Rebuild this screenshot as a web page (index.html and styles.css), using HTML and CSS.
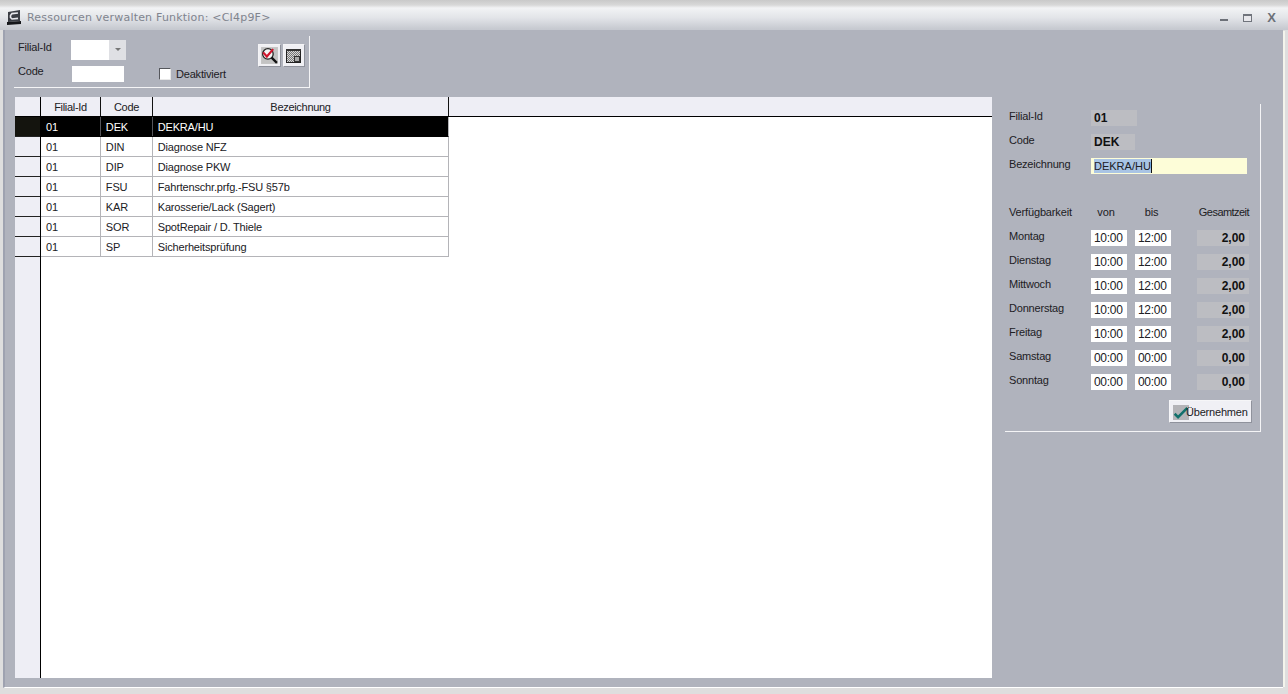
FILE: index.html
```html
<!DOCTYPE html>
<html lang="de">
<head>
  <meta charset="UTF-8" />
  <title>Ressourcen verwalten</title>
  <link rel="stylesheet" href="styles.css">
</head>
<body>
  <div class="window">
    <header class="titlebar">
      <svg class="app-icon" width="14" height="15" viewBox="0 0 14 15">
        <path d="M1 2 L13 0 L13 11 L1 12 Z" fill="#3a3d44"/>
        <path d="M11 3 L5 3.6 L3.5 5.5 L3.5 7.5 L5 9 L11 8.4" fill="none" stroke="#e8e8ee" stroke-width="1.6"/>
        <path d="M0 12 L14 11 L14 14 L0 15 Z" fill="#15161a"/>
      </svg>
      <span class="title">Ressourcen verwalten Funktion: &lt;CI4p9F&gt;</span>
      <div class="win-buttons">
        <span class="win-min"></span>
        <span class="win-max"></span>
        <span class="win-close">X</span>
      </div>
    </header>

    <main class="client">
      <section class="filter">
        <label class="lbl lbl-id">Filial-Id</label>
        <div class="combo"><span class="combo-text"></span><span class="combo-arrow"></span></div>
        <div class="tools">
          <button class="tool">
            <svg width="19" height="19" viewBox="0 0 18 18">
              <rect x="1" y="1" width="16" height="16" fill="#c3c3c3"/>
              <circle cx="7.5" cy="7.5" r="5" fill="#f4f4f4" stroke="#222" stroke-width="1.2"/>
              <path d="M11 11 L16 16" stroke="#111" stroke-width="2.2"/>
              <path d="M3 6 L6.5 10 L12.5 3" fill="none" stroke="#d0142c" stroke-width="2"/>
            </svg>
          </button>
          <button class="tool">
            <svg width="17" height="16" viewBox="0 0 17 16">
              <defs>
                <pattern id="dither" width="2" height="2" patternUnits="userSpaceOnUse">
                  <rect width="2" height="2" fill="#d8d8d8"/>
                  <rect width="1" height="1" fill="#777"/>
                  <rect x="1" y="1" width="1" height="1" fill="#777"/>
                </pattern>
              </defs>
              <rect x="1.5" y="1.5" width="14" height="13" fill="url(#dither)" stroke="#222"/>
              <rect x="1" y="1" width="15" height="2" fill="#333"/>
              <rect x="9.5" y="8.5" width="5" height="5" fill="#aaa" stroke="#333"/>
            </svg>
          </button>
        </div>
        <label class="lbl lbl-code">Code</label>
        <div class="code-input"></div>
        <label class="check"><span class="checkbox"></span>Deaktiviert</label>
      </section>

      <div class="content">
        <section class="table-wrap">
          <div class="table-head">
            <div class="ind"></div>
            <div class="th col-id">Filial-Id</div>
            <div class="th col-code">Code</div>
            <div class="th col-name">Bezeichnung</div>
          </div>
          <div class="table-body">
            <div class="ind-col">
              <div class="ind-cell selected"></div>
              <div class="ind-cell"></div>
              <div class="ind-cell"></div>
              <div class="ind-cell"></div>
              <div class="ind-cell"></div>
              <div class="ind-cell"></div>
              <div class="ind-cell"></div>
            </div>
            <div class="rows">
              <div class="row selected"><div class="td col-id">01</div><div class="td col-code">DEK</div><div class="td col-name">DEKRA/HU</div></div>
              <div class="row"><div class="td col-id">01</div><div class="td col-code">DIN</div><div class="td col-name">Diagnose NFZ</div></div>
              <div class="row"><div class="td col-id">01</div><div class="td col-code">DIP</div><div class="td col-name">Diagnose PKW</div></div>
              <div class="row"><div class="td col-id">01</div><div class="td col-code">FSU</div><div class="td col-name">Fahrtenschr.prfg.-FSU §57b</div></div>
              <div class="row"><div class="td col-id">01</div><div class="td col-code">KAR</div><div class="td col-name">Karosserie/Lack (Sagert)</div></div>
              <div class="row"><div class="td col-id">01</div><div class="td col-code">SOR</div><div class="td col-name">SpotRepair / D. Thiele</div></div>
              <div class="row"><div class="td col-id">01</div><div class="td col-code">SP</div><div class="td col-name">Sicherheitsprüfung</div></div>
            </div>
          </div>
        </section>

        <aside class="detail">
          <div class="detail-top">
            <div class="lbl">Filial-Id</div>
            <div class="readonly val-id">01</div>
            <div class="lbl">Code</div>
            <div class="readonly val-code">DEK</div>
            <div class="lbl">Bezeichnung</div>
            <div class="edit"><span class="sel-text">DEKRA/HU</span><span class="caret"></span></div>
          </div>

          <div class="schedule">
            <div class="sch-head">Verfügbarkeit</div>
            <div class="sch-head head-von">von</div>
            <div class="sch-head head-bis">bis</div>
            <div class="sch-head head-total">Gesamtzeit</div>

            <div class="lbl">Montag</div><div class="time">10:00</div><div class="time">12:00</div><div class="total">2,00</div>
            <div class="lbl">Dienstag</div><div class="time">10:00</div><div class="time">12:00</div><div class="total">2,00</div>
            <div class="lbl">Mittwoch</div><div class="time">10:00</div><div class="time">12:00</div><div class="total">2,00</div>
            <div class="lbl">Donnerstag</div><div class="time">10:00</div><div class="time">12:00</div><div class="total">2,00</div>
            <div class="lbl">Freitag</div><div class="time">10:00</div><div class="time">12:00</div><div class="total">2,00</div>
            <div class="lbl">Samstag</div><div class="time">00:00</div><div class="time">00:00</div><div class="total">0,00</div>
            <div class="lbl">Sonntag</div><div class="time">00:00</div><div class="time">00:00</div><div class="total">0,00</div>
          </div>

          <div class="actions">
            <button class="apply">
              <span class="apply-icon">
                <svg width="19" height="15" viewBox="0 0 19 15">
                  <path d="M2 9 L6 13 L17 2" fill="none" stroke="#12706c" stroke-width="3"/>
                </svg>
              </span>
              Übernehmen
            </button>
          </div>
        </aside>
      </div>
    </main>
  </div>
</body>
</html>
```

FILE: styles.css
```css
:root {
  --panel: #b0b3bd;
  --head: #eeeef5;
  --readonly: #bcbdc2;
  --line: #b4b4b8;
  --text: #202024;
}

* {
  box-sizing: border-box;
}

html, body {
  margin: 0;
  padding: 0;
  overflow: hidden;
}

body {
  font-family: "Liberation Sans", Arial, sans-serif;
  font-size: 11px;
  color: var(--text);
  background: #dedede;
}

.window {
  width: 1288px;
  height: 694px;
  display: flex;
  flex-direction: column;
}

.titlebar {
  height: 30px;
  flex: none;
  display: flex;
  align-items: center;
  padding: 5px 0 0 7px;
  background: linear-gradient(to bottom, #c9c9c9 0, #d8d8d8 5px, #f2f3f5 8px, #e2e4e8 18px, #c6c9d0 29px);
}

.title {
  margin-left: 6px;
  font-family: "DejaVu Sans", sans-serif;
  font-size: 11px;
  letter-spacing: 0.2px;
  color: #80848e;
}

.win-buttons {
  margin-left: auto;
  display: flex;
  align-items: center;
  padding-right: 12px;
}

.win-min {
  width: 8px;
  height: 2px;
  margin-top: 5px;
  background: #6c7078;
}

.win-max {
  width: 9px;
  height: 8px;
  margin-left: 15px;
  border: 1px solid #70747c;
  border-top-width: 2px;
  background: #e8e8ec;
}

.win-close {
  margin-left: 15px;
  font-size: 13px;
  font-weight: bold;
  line-height: 12px;
  color: #6c7078;
}

.client {
  flex: 1;
  margin: 0 5px 6px 3px;
  border-left: 2px solid #9ea2b0;
  border-bottom: 1px solid #fff;
  padding-left: 9px;
  background: var(--panel);
  box-shadow: 3px 0 0 -1px #f4f4ec;
  display: flex;
  flex-direction: column;
}

.filter {
  width: 296px;
  height: 52px;
  margin: 6px 0 0 0;
  padding: 4px 0 0 4px;
  border-right: 1px solid #f4f4f6;
  border-bottom: 1px solid #f4f4f6;
  display: grid;
  grid-template-columns: 52px 89px 99px 47px;
  grid-template-rows: 22px 24px;
  align-items: start;
}

.lbl {
  white-space: nowrap;
  letter-spacing: -0.2px;
}

.lbl-id {
  grid-column: 1;
  grid-row: 1;
  margin-top: 1px;
}

.combo {
  grid-column: 2;
  grid-row: 1;
  width: 55px;
  height: 20px;
  margin: 0 0 0 1px;
  display: flex;
  background: #fff;
}

.combo-text {
  flex: 1;
}

.combo-arrow {
  width: 17px;
  background: #dfe0e4;
  position: relative;
}

.combo-arrow::after {
  content: "";
  position: absolute;
  left: 6px;
  top: 8px;
  border: 3px solid transparent;
  border-top: 3px solid #777;
}

.tools {
  grid-column: 4;
  grid-row: 1 / span 2;
  margin-top: 4px;
  display: flex;
  gap: 2px;
}

.tool {
  width: 23px;
  height: 23px;
  padding: 0;
  display: flex;
  align-items: center;
  justify-content: center;
  background: #f0f0f4;
  border: 1px solid #f4f4f6;
  border-right-color: #8f929c;
  border-bottom-color: #8f929c;
}

.lbl-code {
  grid-column: 1;
  grid-row: 2;
  margin-top: 3px;
}

.code-input {
  grid-column: 2;
  grid-row: 2;
  width: 52px;
  height: 16px;
  margin: 4px 0 0 2px;
  background: #fff;
}

.check {
  grid-column: 3;
  grid-row: 2;
  display: flex;
  align-items: center;
  gap: 5px;
  margin-top: 6px;
  letter-spacing: -0.2px;
}

.checkbox {
  width: 12px;
  height: 12px;
  background: #fff;
  border: 1px solid #55575c;
  border-right-color: #e8e8e8;
  border-bottom-color: #e8e8e8;
}

.content {
  flex: 1;
  display: flex;
  margin: 9px 0 9px 1px;
  gap: 13px;
  min-height: 0;
}

.table-wrap {
  width: 977px;
  flex: none;
  background: #fff;
  display: flex;
  flex-direction: column;
}

.table-head {
  height: 20px;
  flex: none;
  display: flex;
  background: var(--head);
  border-bottom: 1px solid #000;
}

.ind {
  width: 26px;
  border-right: 1px solid #000;
}

.ind-col {
  width: 26px;
  flex: none;
  background: var(--head);
  border-right: 1px solid #000;
}

.ind-cell {
  height: 20px;
  border-bottom: 1px solid #222;
}

.ind-cell.selected {
  background: #14140e;
}

.th {
  display: flex;
  align-items: center;
  justify-content: center;
  border-right: 1px solid #111;
  letter-spacing: -0.3px;
}

.col-id {
  width: 60px;
}

.col-code {
  width: 52px;
}

.col-name {
  width: 296px;
}

.table-body {
  flex: 1;
  display: flex;
}

.rows {
  width: 408px;
}

.row {
  height: 20px;
  display: flex;
  border-bottom: 1px solid var(--line);
  border-right: 1px solid var(--line);
}

.row.selected {
  background: #000;
  color: #fff;
  border-bottom-color: #000;
}

.td {
  display: flex;
  align-items: center;
  padding-left: 5px;
  border-right: 1px solid var(--line);
  white-space: nowrap;
  letter-spacing: -0.17px;
}

.td.col-name {
  border-right: none;
}

.row.selected .td {
  border-right-color: #55555a;
}

.detail {
  width: 256px;
  height: 328px;
  margin-top: 7px;
  padding: 6px 0 0 4px;
  border-right: 1px solid #f4f4f6;
  border-bottom: 1px solid #f4f4f6;
}

.detail-top {
  display: grid;
  grid-template-columns: 82px 1fr;
  grid-auto-rows: 24px;
}

.detail-top .lbl {
  line-height: 12px;
}

.readonly {
  height: 16px;
  padding-left: 3px;
  background: var(--readonly);
  font-weight: bold;
  font-size: 12px;
  line-height: 16px;
  color: #111;
}

.val-id {
  width: 46px;
}

.val-code {
  width: 44px;
}

.edit {
  width: 156px;
  height: 16px;
  padding-left: 3px;
  background: #fdfdd8;
  display: flex;
  align-items: center;
}

.sel-text {
  background: #a9c4e4;
  line-height: 14px;
}

.caret {
  width: 1px;
  height: 14px;
  background: #111;
}

.schedule {
  display: grid;
  grid-template-columns: 82px 44px 62px 52px;
  grid-auto-rows: 24px;
  margin-top: 24px;
}

.sch-head {
  letter-spacing: -0.15px;
  line-height: 12px;
  white-space: nowrap;
}

.head-von {
  width: 30px;
  text-align: center;
}

.head-bis {
  width: 33px;
  text-align: center;
}

.head-total {
  letter-spacing: -0.55px;
  text-align: right;
}

.schedule .lbl {
  line-height: 12px;
}

.time {
  width: 36px;
  height: 16px;
  padding-left: 3px;
  background: #fff;
  font-size: 12px;
  line-height: 16px;
  letter-spacing: -0.3px;
}

.total {
  height: 16px;
  padding-right: 4px;
  background: var(--readonly);
  font-size: 12px;
  font-weight: bold;
  line-height: 16px;
  text-align: right;
  color: #111;
}

.actions {
  display: flex;
  justify-content: flex-end;
  padding-right: 8px;
  margin-top: 2px;
}

.apply {
  width: 83px;
  height: 23px;
  padding: 0 0 0 3px;
  display: flex;
  align-items: center;
  font: inherit;
  color: var(--text);
  letter-spacing: -0.2px;
  white-space: nowrap;
  background: #f0f0f5;
  border: 1px solid #f6f6f8;
  border-right-color: #8f929c;
  border-bottom-color: #8f929c;
}

.apply-icon {
  width: 16px;
  height: 15px;
  margin: 2px -3px 0 0;
  background: #b4b4b8;
  display: flex;
  align-items: center;
}
```
